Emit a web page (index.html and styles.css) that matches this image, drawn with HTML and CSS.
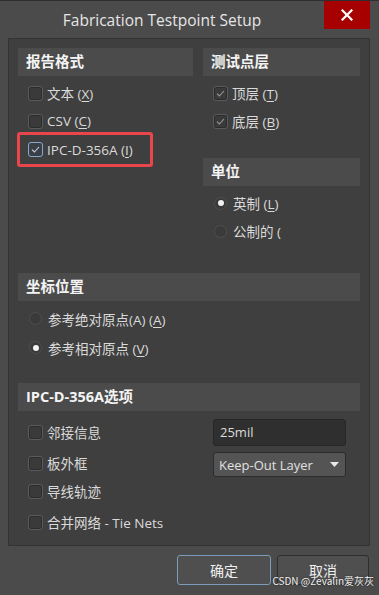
FILE: index.html
```html
<!DOCTYPE html>
<html lang="zh">
<head>
<meta charset="utf-8">
<title>Fabrication Testpoint Setup</title>
<link rel="stylesheet" href="styles.css">
</head>
<body>
<div class="window">
  <div class="titlebar">
    <div class="title">Fabrication Testpoint Setup</div>
    <div class="close"><svg width="12" height="12" viewBox="0 0 12 12"><path d="M1.5 1.5L10.5 10.5M10.5 1.5L1.5 10.5" stroke="#fff" stroke-width="2.2" stroke-linecap="square"/></svg></div>
  </div>
  <div class="panel">
    <div class="top">
      <div class="col left">
        <div class="hdr">报告格式</div>
        <div class="list first">
          <div class="row"><span class="cb"></span><span>文本 (<u>X</u>)</span></div>
          <div class="row"><span class="cb"></span><span>CSV (<u>C</u>)</span></div>
          <div class="row mark"><span class="cb blue"><svg width="11" height="11" viewBox="0 0 11 11"><path d="M2 5.6L4.4 8L9 3" fill="none" stroke="#c9d6e2" stroke-width="1.1"/></svg></span><span>IPC-D-356A (<u>I</u>)</span></div>
        </div>
      </div>
      <div class="col right">
        <div class="hdr">测试点层</div>
        <div class="list first">
          <div class="row"><span class="cb"><svg width="11" height="11" viewBox="0 0 11 11"><path d="M2 5.6L4.4 8L9 3" fill="none" stroke="#9a9a9a" stroke-width="1.1"/></svg></span><span>顶层 (<u>T</u>)</span></div>
          <div class="row"><span class="cb"><svg width="11" height="11" viewBox="0 0 11 11"><path d="M2 5.6L4.4 8L9 3" fill="none" stroke="#9a9a9a" stroke-width="1.1"/></svg></span><span>底层 (<u>B</u>)</span></div>
        </div>
        <div class="hdr unit">单位</div>
        <div class="list rlist">
          <div class="row"><span class="rb on"></span><span>英制 (<u>L</u>)</span></div>
          <div class="row"><span class="rb"></span><span>公制的 (</span></div>
        </div>
      </div>
    </div>
    <div class="hdr wide coord">坐标位置</div>
    <div class="list rlist2">
      <div class="row"><span class="rb"></span><span>参考绝对原点(A) (<u>A</u>)</span></div>
      <div class="row"><span class="rb on"></span><span>参考相对原点 (<u>V</u>)</span></div>
    </div>
    <div class="hdr wide opts">IPC-D-356A选项</div>
    <div class="optgrid">
      <div class="optleft">
        <div class="row r1"><span class="cb"></span><span>邻接信息</span></div>
        <div class="row r2"><span class="cb"></span><span>板外框</span></div>
        <div class="row r3"><span class="cb"></span><span>导线轨迹</span></div>
        <div class="row r4"><span class="cb"></span><span>合并网络 - Tie Nets</span></div>
      </div>
      <div class="optright">
        <div class="input">25mil</div>
        <div class="select"><span>Keep-Out Layer</span><svg width="9" height="5" viewBox="0 0 9 5"><path d="M0 0H9L4.5 5Z" fill="#e8e8e8"/></svg></div>
      </div>
    </div>
  </div>
  <div class="buttons">
    <div class="btn ok">确定</div>
    <div class="btn cancel">取消</div>
  </div>
  <div class="watermark">CSDN @Zevalin爱灰灰</div>
</div>
</body>
</html>
```
FILE: styles.css
```css
* { box-sizing: border-box; }
html, body { margin: 0; padding: 0; }
body {
  width: 379px;
  height: 595px;
  background: #4b4b4b;
  font-family: "Open Sans", "Noto Sans CJK SC", sans-serif;
  color: #dcdcdc;
  overflow: hidden;
}
.window {
  position: relative;
  width: 379px;
  height: 595px;
  border-top: 1px solid #2e2e2e;
}
.titlebar {
  display: flex;
  height: 37px;
  align-items: flex-start;
}
.title {
  flex: 0 0 324px;
  text-align: center;
  font-size: 15.5px;
  line-height: 39px;
  color: #e6e6e6;
}
.close {
  width: 46px;
  height: 28px;
  background: #a60000;
  display: flex;
  align-items: center;
  justify-content: center;
}
.panel {
  margin: 0 9px 0 8px;
  height: 508px;
  background: #3f3f3f;
  border: 1px solid #333;
  padding: 9px 9px 0 9px;
}
.top {
  display: flex;
  gap: 10px;
}
.col.left { width: 175px; }
.col.right { width: 157px; }
.hdr {
  height: 28px;
  background: #4b4b4b;
  color: #f4f4f4;
  font-weight: bold;
  font-size: 14.5px;
  line-height: 28px;
  padding-left: 8px;
}
.list { padding-left: 10px; }
.list.first { margin-top: 3px; }
.row {
  display: flex;
  align-items: center;
  height: 28px;
  gap: 4px;
  font-size: 13.5px;
  color: #dadada;
  white-space: nowrap;
}
.row u { text-decoration-thickness: 1px; text-underline-offset: 2px; }
.cb {
  width: 15px;
  height: 15px;
  flex: 0 0 15px;
  border-radius: 3px;
  background: #3a3a3a;
  border: 1px solid #5a5a5a;
  box-shadow: inset 0 0 0 1px #2c2c2c;
  display: flex;
  align-items: center;
  justify-content: center;
}
.cb.blue {
  border-color: #84a8cc;
  box-shadow: none;
  background: #3a3f45;
}
.rb {
  width: 13px;
  height: 13px;
  flex: 0 0 13px;
  margin-left: 1px;
  border-radius: 50%;
  background: #3a3a3a;
  border: 1px solid #4f4f4f;
  display: flex;
  align-items: center;
  justify-content: center;
  margin-right: 2px;
}
.rb.on::after {
  content: "";
  width: 6px;
  height: 6px;
  border-radius: 50%;
  background: #f2f2f2;
}
.row.mark {
  width: 136px;
  height: 35px;
  margin: -3px 0 -4px -11px;
  padding-left: 8px;
  border: 3px solid #e8464a;
  border-radius: 3px;
}
.hdr.unit { margin-top: 23px; }
.rlist { margin-top: 3px; }
.hdr.coord { margin-top: 28px; }
.rlist2 { margin-top: 3px; }
.rlist2 .row { height: 29px; }
.hdr.opts { margin-top: 21px; }
.optgrid {
  display: flex;
  gap: 10px;
}
.optleft { width: 175px; padding-left: 10px; }
.optright { width: 157px; padding-left: 10px; padding-top: 8px; }
.row.r1 { margin-top: 7px; }
.row.r2 { margin-top: 3px; }
.row.r4 { margin-top: 3px; }
.input {
  width: 133px;
  height: 27px;
  background: #2f2f2f;
  border: 1px solid #262626;
  border-radius: 3px;
  font-size: 13px;
  line-height: 25px;
  padding-left: 6px;
  color: #dcdcdc;
}
.select {
  margin-top: 6px;
  width: 133px;
  height: 25px;
  background: #545454;
  border: 1px solid #2c2c2c;
  border-radius: 3px;
  font-size: 13px;
  padding: 0 6px 0 5px;
  display: flex;
  align-items: center;
  justify-content: space-between;
  color: #e0e0e0;
}
.buttons {
  display: flex;
  justify-content: flex-end;
  gap: 6px;
  padding: 9px 10px 0 0;
}
.btn {
  width: 94px;
  height: 30px;
  border-radius: 3px;
  background: #4f4f4f;
  display: flex;
  align-items: center;
  justify-content: center;
  font-size: 14px;
  color: #f0f0f0;
}
.btn.ok { border: 1px solid #7d9cbc; }
.btn.cancel { width: 92px; border: 1px solid #2e2e2e; }
.watermark {
  position: absolute;
  right: 5px;
  bottom: 7px;
  font-size: 10px;
  color: #f2f2f2;
  text-shadow: 0 0 2px #222;
  font-family: "Noto Sans CJK SC", sans-serif;
}
```
